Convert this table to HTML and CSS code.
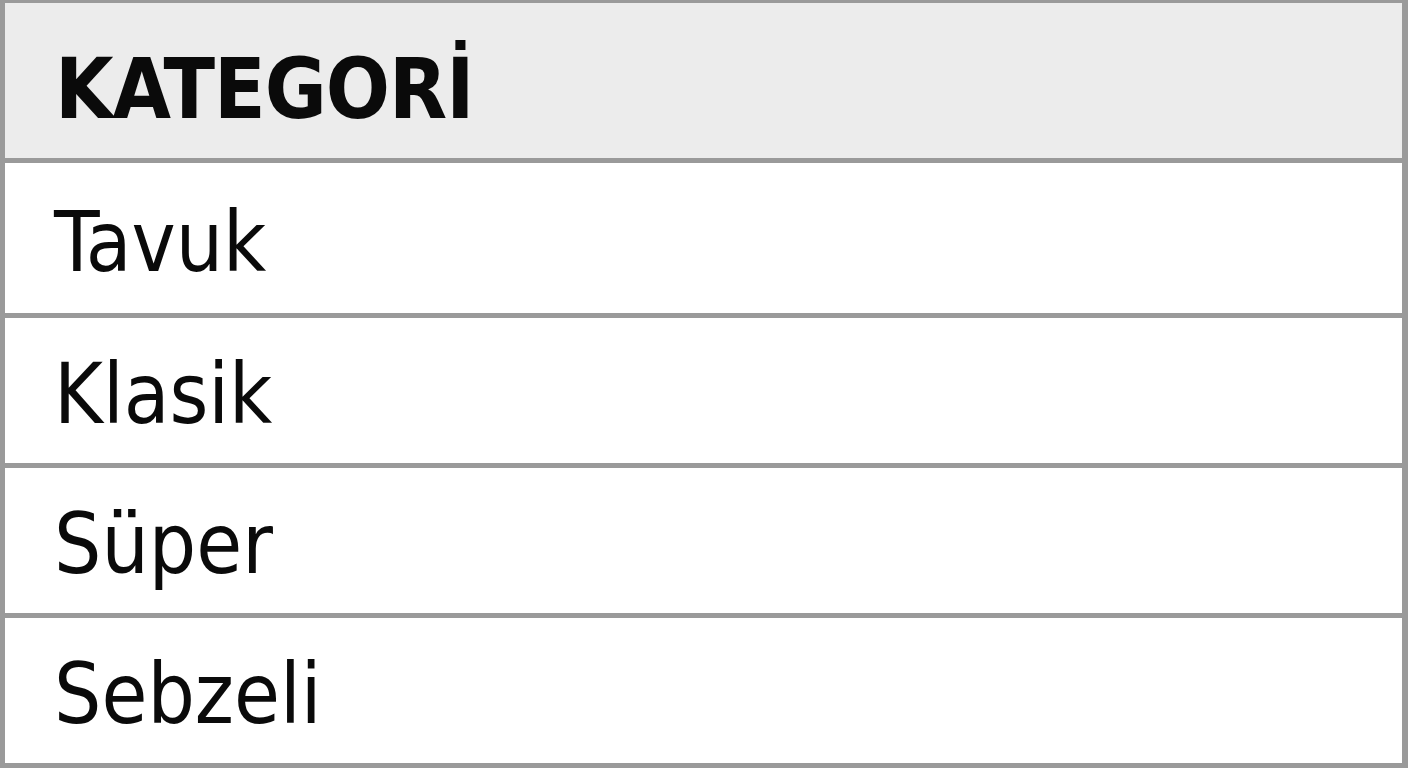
FILE: index.html
```html
<!DOCTYPE html>
<html lang="tr">
<head>
<meta charset="utf-8">
<link rel="stylesheet" href="styles.css">
<title>Kategori</title>
</head>
<body>
<div class="table">
  <div class="cell head">KATEGORİ</div>
  <div class="cell first">Tavuk</div>
  <div class="cell">Klasik</div>
  <div class="cell">Süper</div>
  <div class="cell">Sebzeli</div>
</div>
</body>
</html>
```
FILE: styles.css
```css
html, body {
  margin: 0;
  padding: 0;
  background: #9a9a9a;
}
.table {
  width: 1408px;
  height: 768px;
  box-sizing: border-box;
  padding: 3px 6px 5px 5px;
  display: flex;
  flex-direction: column;
  gap: 5px;
  background: #9a9a9a;
  font-family: "DejaVu Sans Condensed", "DejaVu Sans", sans-serif;
  font-stretch: condensed;
  color: #0a0a0a;
}
.cell {
  height: 145px;
  flex: none;
  box-sizing: border-box;
  background: #ffffff;
  padding: 28px 0 0 49px;
  font-size: 83px;
  line-height: normal;
  white-space: nowrap;
}
.cell.first {
  height: 150px;
  padding-top: 31px;
}
.cell.head {
  height: 155px;
  background: #ececec;
  font-weight: bold;
  font-size: 84px;
  letter-spacing: -1px;
  padding: 37px 0 0 50px;
}
```
